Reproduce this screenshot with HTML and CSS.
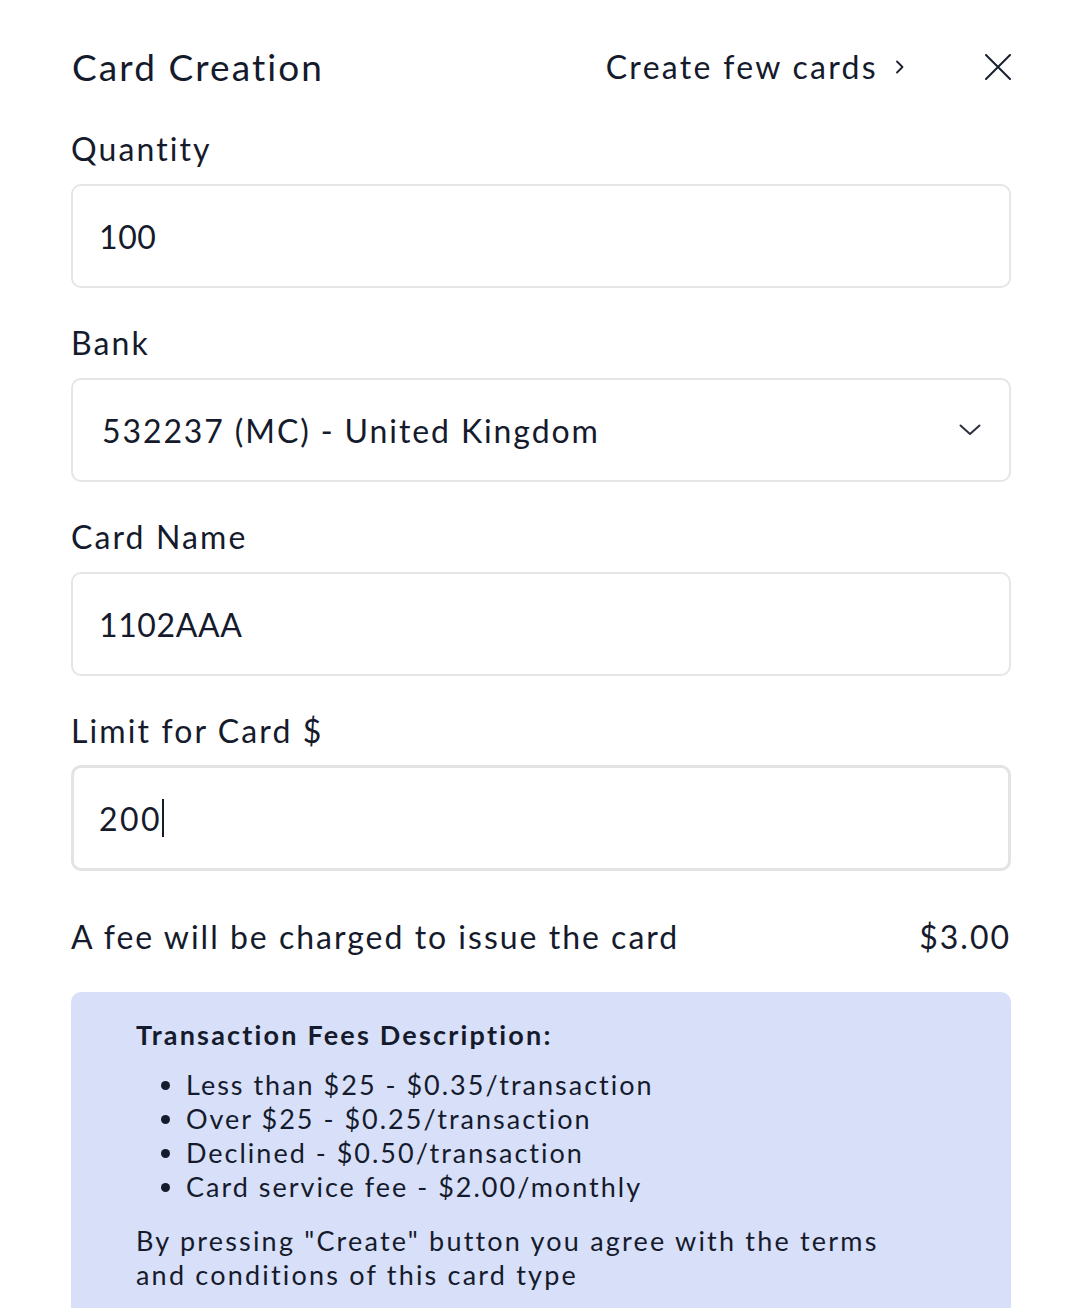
FILE: index.html
```html
<!DOCTYPE html>
<html lang="en">
<head>
<meta charset="utf-8">
<title>Card Creation</title>
<link rel="stylesheet" href="styles.css">
</head>
<body>
<div class="panel">
  <header class="header">
    <h1 class="title">Card Creation</h1>
    <div class="header-actions">
      <a class="few-link" href="#">Create few cards
        <svg class="chev-right" width="12" height="16" viewBox="0 0 12 16"><path d="M3 2.5 L8.5 8 L3 13.5" fill="none" stroke="#1a2030" stroke-width="1.8" stroke-linecap="round" stroke-linejoin="round"/></svg>
      </a>
      <button class="close" type="button" aria-label="Close">
        <svg width="26" height="26" viewBox="0 0 26 26"><path d="M1 1 L25 25 M25 1 L1 25" fill="none" stroke="#1a2030" stroke-width="2" stroke-linecap="round"/></svg>
      </button>
    </div>
  </header>

  <div class="group">
    <div class="label">Quantity</div>
    <div class="field">100</div>
  </div>

  <div class="group">
    <div class="label">Bank</div>
    <div class="field select">
      <span class="select-value">532237 (MC) - United Kingdom</span>
      <svg class="chev-down" width="22" height="12" viewBox="0 0 22 12"><path d="M1.5 1.5 L11 10 L20.5 1.5" fill="none" stroke="#2b3040" stroke-width="2" stroke-linecap="round" stroke-linejoin="round"/></svg>
    </div>
  </div>

  <div class="group">
    <div class="label">Card Name</div>
    <div class="field">1102AAA</div>
  </div>

  <div class="group">
    <div class="label">Limit for Card $</div>
    <div class="field focused">200<span class="caret"></span></div>
  </div>

  <div class="fee-row">
    <span>A fee will be charged to issue the card</span>
    <span>$3.00</span>
  </div>

  <div class="info">
    <div class="info-title">Transaction Fees Description:</div>
    <ul class="info-list">
      <li>Less than $25 - $0.35/transaction</li>
      <li>Over $25 - $0.25/transaction</li>
      <li>Declined - $0.50/transaction</li>
      <li>Card service fee - $2.00/monthly</li>
    </ul>
    <p class="info-note">By pressing "Create" button you agree with the terms<br>and conditions of this card type</p>
  </div>
</div>
</body>
</html>
```

FILE: styles.css
```css
html, body {
  margin: 0;
  padding: 0;
  background: #ffffff;
}
body {
  font-family: Lato, "Noto Sans", sans-serif;
  color: #151b2c;
}
.panel {
  padding: 43px 65px 0 71px;
  height: 1308px;
  overflow: hidden;
  box-sizing: border-box;
}
.header {
  display: flex;
  align-items: center;
  justify-content: space-between;
  height: 48px;
  margin-bottom: 38px;
}
.title {
  margin: 0 0 0 1px;
  font-size: 37px;
  font-weight: 400;
  line-height: 48px;
  letter-spacing: 2.1px;
}
.header-actions {
  display: flex;
  align-items: center;
}
.few-link {
  display: flex;
  align-items: center;
  color: #151b2c;
  text-decoration: none;
  font-size: 32px;
  letter-spacing: 2.3px;
  line-height: 40px;
}
.chev-right {
  margin-left: 16px;
}
.close {
  margin-left: 79px;
  padding: 0;
  border: 0;
  background: none;
  display: flex;
  width: 26px;
  height: 26px;
}
.group {
  margin-bottom: 35px;
}
.label {
  font-size: 32px;
  line-height: 40px;
  margin-bottom: 15px;
  letter-spacing: 2.1px;
}
.field {
  box-sizing: border-box;
  height: 104px;
  border: 2px solid #e6e6e8;
  border-radius: 10px;
  display: flex;
  align-items: center;
  padding-left: 26px;
  font-size: 32px;
  letter-spacing: 0.6px;
}
.field.select {
  padding-left: 29px;
  padding-right: 28px;
  justify-content: space-between;
  letter-spacing: 1.9px;
}
.field.focused {
  height: 106px;
  border: 3px solid #e3e3e5;
  margin-top: -1px;
  padding-left: 25px;
  letter-spacing: 2.4px;
}
.caret {
  display: inline-block;
  width: 2px;
  height: 38px;
  background: #151b2c;
}
.fee-row {
  margin-top: 46px;
  display: flex;
  justify-content: space-between;
  font-size: 32px;
  line-height: 40px;
  letter-spacing: 2px;
}
.info {
  margin-top: 35px;
  background: #d8dff9;
  border-radius: 10px;
  padding: 26px 30px 40px 65px;
  font-size: 27px;
  line-height: 34px;
  letter-spacing: 2px;
}
.info-title {
  font-weight: 700;
  letter-spacing: 2.2px;
}
.info-list {
  margin: 16px 0 20px 0;
  padding-left: 50px;
}
.info-note {
  margin: 0;
  letter-spacing: 2.2px;
}
```
